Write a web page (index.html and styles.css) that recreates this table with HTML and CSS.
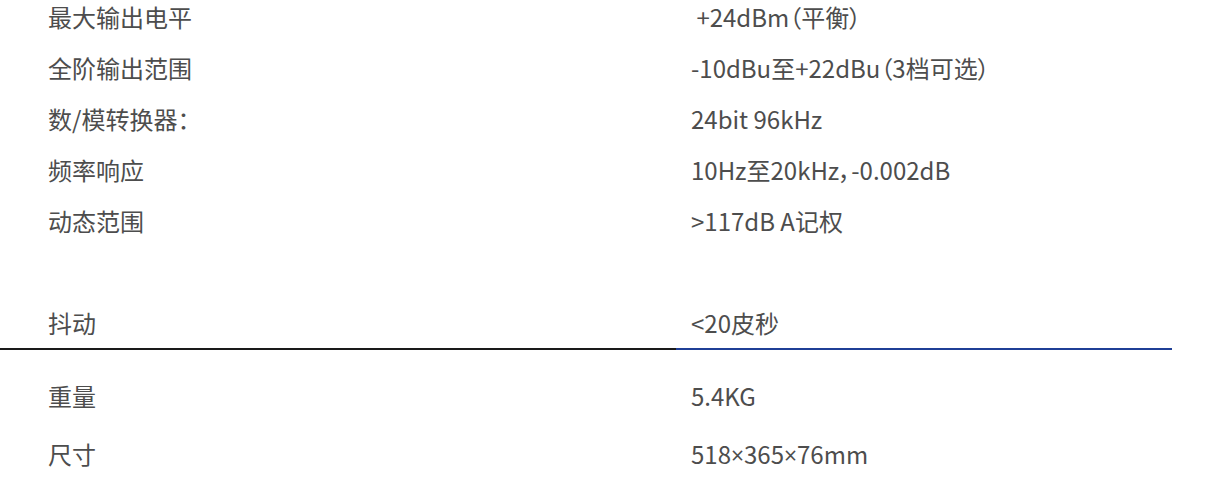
FILE: index.html
```html
<!DOCTYPE html>
<html lang="zh-CN">
<head>
  <meta charset="UTF-8">
  <meta name="viewport" content="width=device-width, initial-scale=1.0">
  <title>技术参数</title>
  <link rel="stylesheet" href="styles.css">
</head>
<body>
  <div class="specs">
    <div class="spec-row">
      <div class="spec-name">最大输出电平</div>
      <div class="spec-value">&nbsp;+24dBm（平衡）</div>
    </div>
    <div class="spec-row">
      <div class="spec-name">全阶输出范围</div>
      <div class="spec-value">-10dBu至+22dBu（3档可选）</div>
    </div>
    <div class="spec-row">
      <div class="spec-name">数/模转换器：</div>
      <div class="spec-value">24bit 96kHz</div>
    </div>
    <div class="spec-row">
      <div class="spec-name">频率响应</div>
      <div class="spec-value">10Hz至20kHz，-0.002dB</div>
    </div>
    <div class="spec-row">
      <div class="spec-name">动态范围</div>
      <div class="spec-value">&gt;117dB A记权</div>
    </div>
    <div class="spec-row spec-empty">
      <div class="spec-name"></div>
      <div class="spec-value"></div>
    </div>
    <div class="spec-row spec-last">
      <div class="spec-name">抖动</div>
      <div class="spec-value">&lt;20皮秒</div>
    </div>
  </div>

  <div class="specs specs-bottom">
    <div class="spec-row">
      <div class="spec-name">重量</div>
      <div class="spec-value">5.4KG</div>
    </div>
    <div class="spec-row">
      <div class="spec-name">尺寸</div>
      <div class="spec-value">518<span class="times">×</span>365<span class="times">×</span>76mm</div>
    </div>
  </div>
</body>
</html>
```

FILE: styles.css
```css
body {
  margin: 0;
  font-family: "Noto Sans CJK SC", "Noto Sans", sans-serif;
  color: #4d4d4d;
  background-color: #fff;
}
.specs {
  display: flex;
  flex-direction: column;
  gap: 17px;
  width: 1172px;
}
.spec-row {
  display: grid;
  grid-template-columns: 676px 1fr;
  font-size: 24px;
  line-height: 34px;
  font-feature-settings: "palt";
}
.spec-name {
  padding-left: 48px;
}
.spec-value {
  padding-left: 15px;
}
.spec-empty {
  height: 34px;
}
.spec-last .spec-name,
.spec-last .spec-value {
  padding-bottom: 8px;
}
.spec-last .spec-name {
  border-bottom: 2px solid #1a1a1a;
}
.spec-last .spec-value {
  border-bottom: 2px solid #1f3f96;
}
.specs-bottom {
  margin-top: 29px;
  gap: 24px;
}
.times {
  font-family: "Open Sans", sans-serif;
  font-size: 0.95em;
}
```
